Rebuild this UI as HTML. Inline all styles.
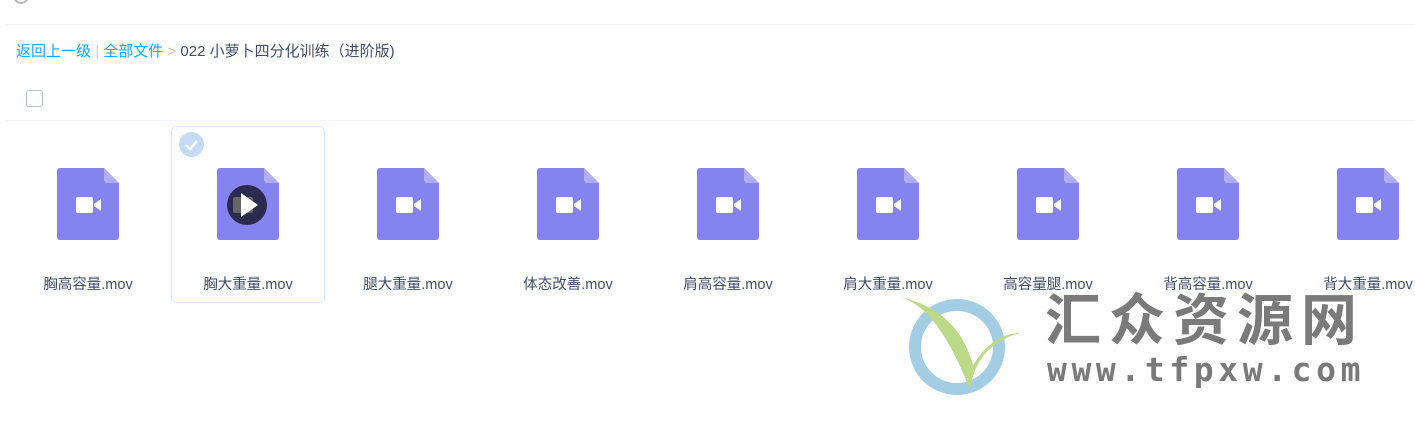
<!DOCTYPE html><html><head><meta charset="utf-8"><style>
body{margin:0;width:1415px;height:436px;background:#fff;font-family:"Liberation Sans","Noto Sans CJK SC",sans-serif;position:relative;overflow:hidden}
.a{position:absolute}
.it{position:absolute;top:126px;width:154px;height:177px;box-sizing:border-box;border:1px solid transparent;border-radius:5px}
.it svg{position:absolute;left:45px;top:41px}
.it span{position:absolute;left:-10px;right:-10px;top:146px;text-align:center;font-size:14.5px;color:#424e67;white-space:nowrap}
</style></head><body>
<div class="a" style="left:13px;top:-12px;width:16px;height:16px;border-radius:50%;border:2px solid #bbb;box-sizing:border-box"></div>
<div class="a" style="left:6px;right:0;top:24px;height:1px;background:#f2f4f7"></div>
<div class="a" style="left:16px;top:40px;font-size:15px;color:#424e67;white-space:nowrap"><span style="color:#09aaff">返回上一级</span> <span style="color:#c5d6ea">|</span> <span style="color:#09aaff">全部文件</span> <span style="color:#c0c4cc">&gt;</span> 022 小萝卜四分化训练（进阶版)</div>
<div class="a" style="left:26px;top:90px;width:17px;height:17px;border:1px solid #b6bfcf;border-radius:3px;box-sizing:border-box"></div>
<div class="a" style="left:6px;right:0;top:120px;height:1px;background:#f2f4f7"></div>
<div id="g"></div>
<svg class="a" style="left:898px;top:285px" width="130" height="120" viewBox="0 0 130 120"><circle cx="59" cy="62" r="42" fill="none" stroke="#a3cde3" stroke-width="12"/><path d="M2 12 Q40 22 72 105 Q78 60 122 48 Q95 48 75 80 Q60 25 2 12Z" fill="#bcd98a"/></svg>
<div class="a" style="left:1045px;top:282px;font-size:56px;font-weight:bold;color:#7a7a7a;letter-spacing:8px;font-family:'Noto Sans CJK SC',sans-serif;line-height:70px;white-space:nowrap">汇众资源网</div>
<div class="a" style="left:1047px;top:350px;font-size:33px;font-weight:bold;color:#7a7a7a;letter-spacing:4.6px;font-family:'DejaVu Sans Mono',monospace;line-height:40px;white-space:nowrap">www.tfpxw.com</div>
<script>
var n=["胸高容量","胸大重量","腿大重量","体态改善","肩高容量","肩大重量","高容量腿","背高容量","背大重量"],h="";
n.forEach(function(t,i){var sel=i==1;
h+='<div class="it" style="left:'+(11+160*i)+'px;'+(sel?'border-color:#d9e9fb':'')+'">'+
(sel?'<div style="position:absolute;left:7px;top:5px;width:25px;height:25px;border-radius:50%;background:#c5dbf3"><svg width="25" height="25" style="position:absolute;left:0;top:0"><path d="M7 13l4 4 7-8" fill="none" stroke="#fff" stroke-width="2.5"/></svg></div>':'')+
'<svg width="62" height="72" viewBox="0 0 62 72"><path d="M3 0H47L62 15V69a3 3 0 0 1-3 3H3a3 3 0 0 1-3-3V3a3 3 0 0 1 3-3Z" fill="#8583ef"/><path d="M47 0L62 15H50a3 3 0 0 1-3-3Z" fill="#aeadf7"/>'+
(sel?'<circle cx="30" cy="37" r="20" fill="#2b2a4f"/><rect x="16" y="29" width="20" height="16" rx="2" fill="#666"/><path d="M24 25L41 37 24 49Z" fill="#fff"/>':'<rect x="19" y="29" width="17" height="16" rx="2" fill="#fff"/><path d="M37 36L44 31V43L37 38Z" fill="#fff"/>')+
'</svg><span>'+t+'.mov</span></div>';});
document.getElementById("g").innerHTML=h;
</script>
</body></html>
